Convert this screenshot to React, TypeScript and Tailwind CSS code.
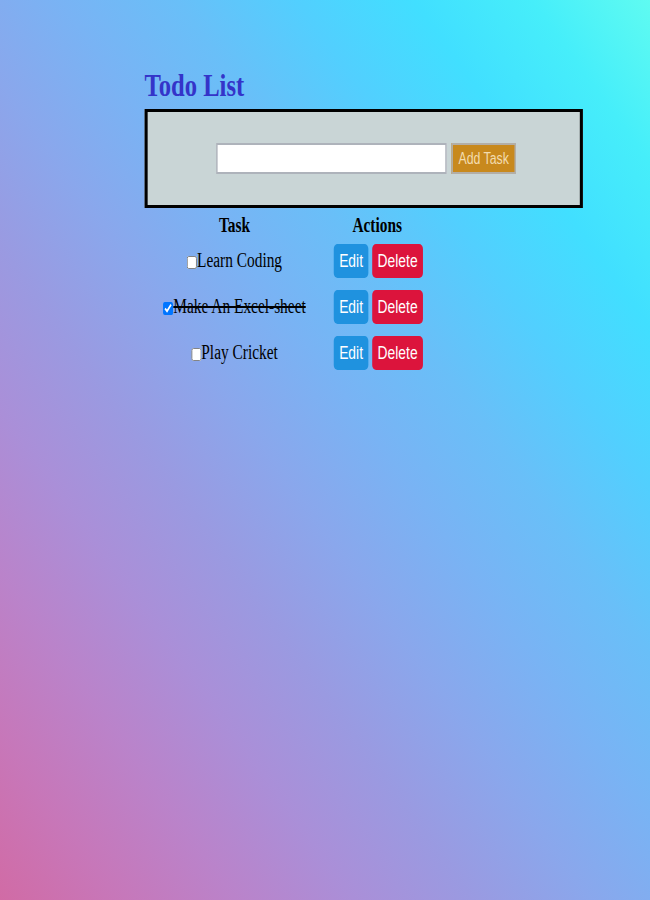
import React, { useState } from 'react';

type Task = {
  id: number;
  text: string;
  done: boolean;
};

const initialTasks: Task[] = [
  { id: 1, text: 'Learn Coding', done: false },
  { id: 2, text: 'Make An Excel-sheet', done: true },
  { id: 3, text: 'Play Cricket', done: false }
];

export default function App() {
  const [tasks, setTasks] = useState<Task[]>(initialTasks);
  const [value, setValue] = useState('');

  const toggle = (id: number) => {
    setTasks(prev =>
      prev.map(t => (t.id === id ? { ...t, done: !t.done } : t))
    );
  };

  const addTask = () => {
    if (!value.trim()) return;
    setTasks(prev => [...prev, { id: Date.now(), text: value, done: false }]);
    setValue('');
  };

  const removeTask = (id: number) => {
    setTasks(prev => prev.filter(t => t.id !== id));
  };

  return (
    <div className="h-[900px] w-full overflow-hidden bg-[linear-gradient(to_right_top,#d16ba5,#c777b9,#ba83ca,#aa8fd8,#9a9ae1,#8aa7ec,#79b3f4,#69bff8,#52cffe,#41dfff,#46eefa,#5ffbf1)]">
      {/* the page was captured narrower than it was laid out */}
      <div className="w-[845px] origin-top-left scale-x-[0.769] pl-[188px] pt-[67px] font-['Liberation_Serif',serif]">
        <h1 className="text-[32px] leading-[37px] font-bold text-[#3434c9]">
          Todo List
        </h1>

        <div className="mt-[5px] w-[570px] border-y-[3px] border-x-4 border-black bg-[#c9d5d6] py-[31px] pl-[6px] flex items-center justify-center gap-[6px]">
          <input
            type="text"
            value={value}
            onChange={e => setValue(e.target.value)}
            className="w-[300px] h-[31px] bg-white border-2 border-[#aeb3bb] outline-none px-1"
          />
          <button
            onClick={addTask}
            className="h-[31px] px-[7px] bg-[#c8891d] border-2 border-[#b3aea6] text-[16px] text-[#f3dcae] font-['Liberation_Sans',Arial,sans-serif]"
          >
            Add Task
          </button>
        </div>

        <table className="mt-[6px] border-collapse">
          <thead>
            <tr>
              <th className="w-[234px] text-[20px] leading-[23px] font-bold text-black text-center">
                Task
              </th>
              <th className="w-[137px] text-[20px] leading-[23px] font-bold text-black text-center">
                Actions
              </th>
            </tr>
          </thead>
          <tbody>
            {tasks.map(task => (
              <tr key={task.id} className="h-[46px]">
                <td className="text-center align-middle text-[20px] text-black">
                  <input
                    type="checkbox"
                    checked={task.done}
                    onChange={() => toggle(task.id)}
                    className="w-[13px] h-[13px] align-middle mr-0"
                  />
                  <span className={task.done ? 'line-through' : ''}>
                    {task.text}
                  </span>
                </td>
                <td className="align-middle pl-[12px] pt-[2px]">
                  <div className="flex gap-[5px] font-['Liberation_Sans',Arial,sans-serif]">
                    <button className="px-[7px] py-[6px] text-[18px] leading-[22px] text-white bg-[#1f92df] rounded-[5px]">
                      Edit
                    </button>
                    <button
                      onClick={() => removeTask(task.id)}
                      className="px-[7px] py-[6px] text-[18px] leading-[22px] text-white bg-[#dc143c] rounded-[5px]"
                    >
                      Delete
                    </button>
                  </div>
                </td>
              </tr>
            ))}
          </tbody>
        </table>
      </div>
    </div>
  );
}
